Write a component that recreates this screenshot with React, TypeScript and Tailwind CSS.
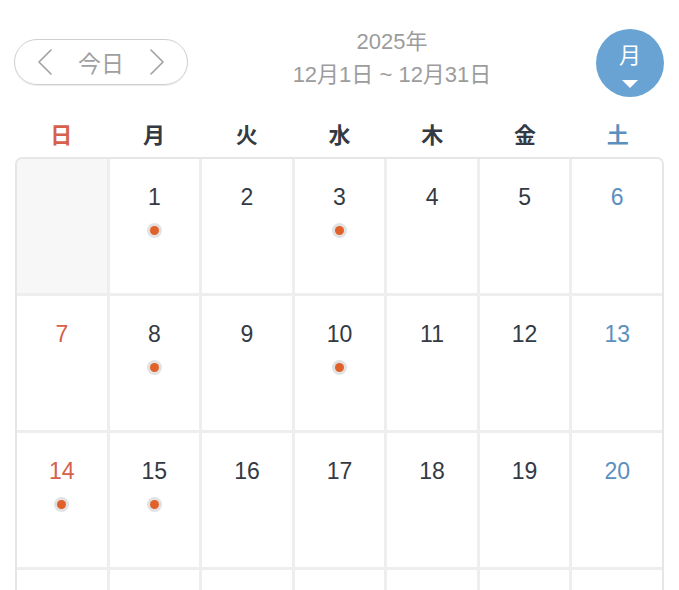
const WEEKDAYS = ['日', '月', '火', '水', '木', '金', '土'];

// null = padding cell before the 1st; 0 = cell of the 4th row that is cut off by the viewport
const DAYS: (number | null)[] = [
  null,
  ...Array.from({ length: 20 }, (_, i) => i + 1),
  0, 0, 0, 0, 0, 0, 0,
];
const MARKED = new Set([1, 3, 8, 10, 14, 15]);

const font = { fontFamily: '"Liberation Sans", "Noto Sans CJK JP", sans-serif' };
const jp = { fontFamily: '"Noto Sans CJK JP", sans-serif' };

function dayColor(col: number) {
  if (col === 0) return 'text-[#d6604c]';
  if (col === 6) return 'text-[#5b8fbe]';
  return 'text-[#333a44]';
}

function Chevron({ dir }: { dir: 'left' | 'right' }) {
  return (
    <svg width="16" height="28" viewBox="0 0 16 28" fill="none" stroke="currentColor" strokeWidth="1.6" strokeLinecap="round" strokeLinejoin="round">
      {dir === 'left' ? <polyline points="14,2 2,14 14,26" /> : <polyline points="2,2 14,14 2,26" />}
    </svg>
  );
}

export default function App() {
  return (
    <div className="w-[679px] h-[590px] overflow-hidden bg-white" style={font}>
      <div className="flex items-start px-[14px] h-[97px]">
        <div className="mt-[39px] flex items-center justify-between w-[174px] h-[46px] rounded-full border border-[#cfcfcf] shadow-[0_1px_1px_rgba(0,0,0,0.08)] pl-[22px] pr-[22px] text-[#a0a0a0]">
          <Chevron dir="left" />
          <span className="text-[23px] leading-none" style={jp}>今日</span>
          <Chevron dir="right" />
        </div>
        <div className="flex-1 mt-[25px] flex flex-col items-center text-[#9c9c9c] text-[22px] leading-[33px]">
          <span>2025年</span>
          <span>12月1日 ~ 12月31日</span>
        </div>
        <div className="mt-[29px] mr-[1px] w-[68px] h-[68px] rounded-full bg-[#68a3d3] flex flex-col items-center justify-center text-white">
          <span className="text-[22px] leading-none mt-[3px]" style={jp}>月</span>
          <span className="mt-[16px] w-0 h-0 border-l-[8px] border-r-[8px] border-t-[8px] border-l-transparent border-r-transparent border-t-white" />
        </div>
      </div>

      <div className="mx-[15px] mt-[16px]">
        <div className="grid grid-cols-7 h-[40px] items-center">
          {WEEKDAYS.map((w, i) => (
            <div key={w} className={`text-center text-[22px] font-bold ${dayColor(i)}`} style={jp}>
              {w}
            </div>
          ))}
        </div>
        <div className="mt-[4px] border-2 border-[#e6e6e6] rounded-t-[7px] bg-[#eeeeee] grid grid-cols-7 gap-[3px] overflow-hidden">
          {DAYS.map((d, i) => (
            <div
              key={i}
              className={`h-[134px] flex flex-col items-center pt-[25px] ${d === null ? 'bg-[#f7f7f7]' : 'bg-white'}`}
            >
              {d !== null && d > 0 && (
                <>
                  <span className={`text-[23px] leading-[26px] ${dayColor(i % 7)}`}>{d}</span>
                  {MARKED.has(d) && (
                    <span className="mt-[13px] w-[15px] h-[15px] rounded-full bg-[#e2e2e2] flex items-center justify-center">
                      <span className="w-[9px] h-[9px] rounded-full bg-[#e0622a]" />
                    </span>
                  )}
                </>
              )}
            </div>
          ))}
        </div>
      </div>
    </div>
  );
}
